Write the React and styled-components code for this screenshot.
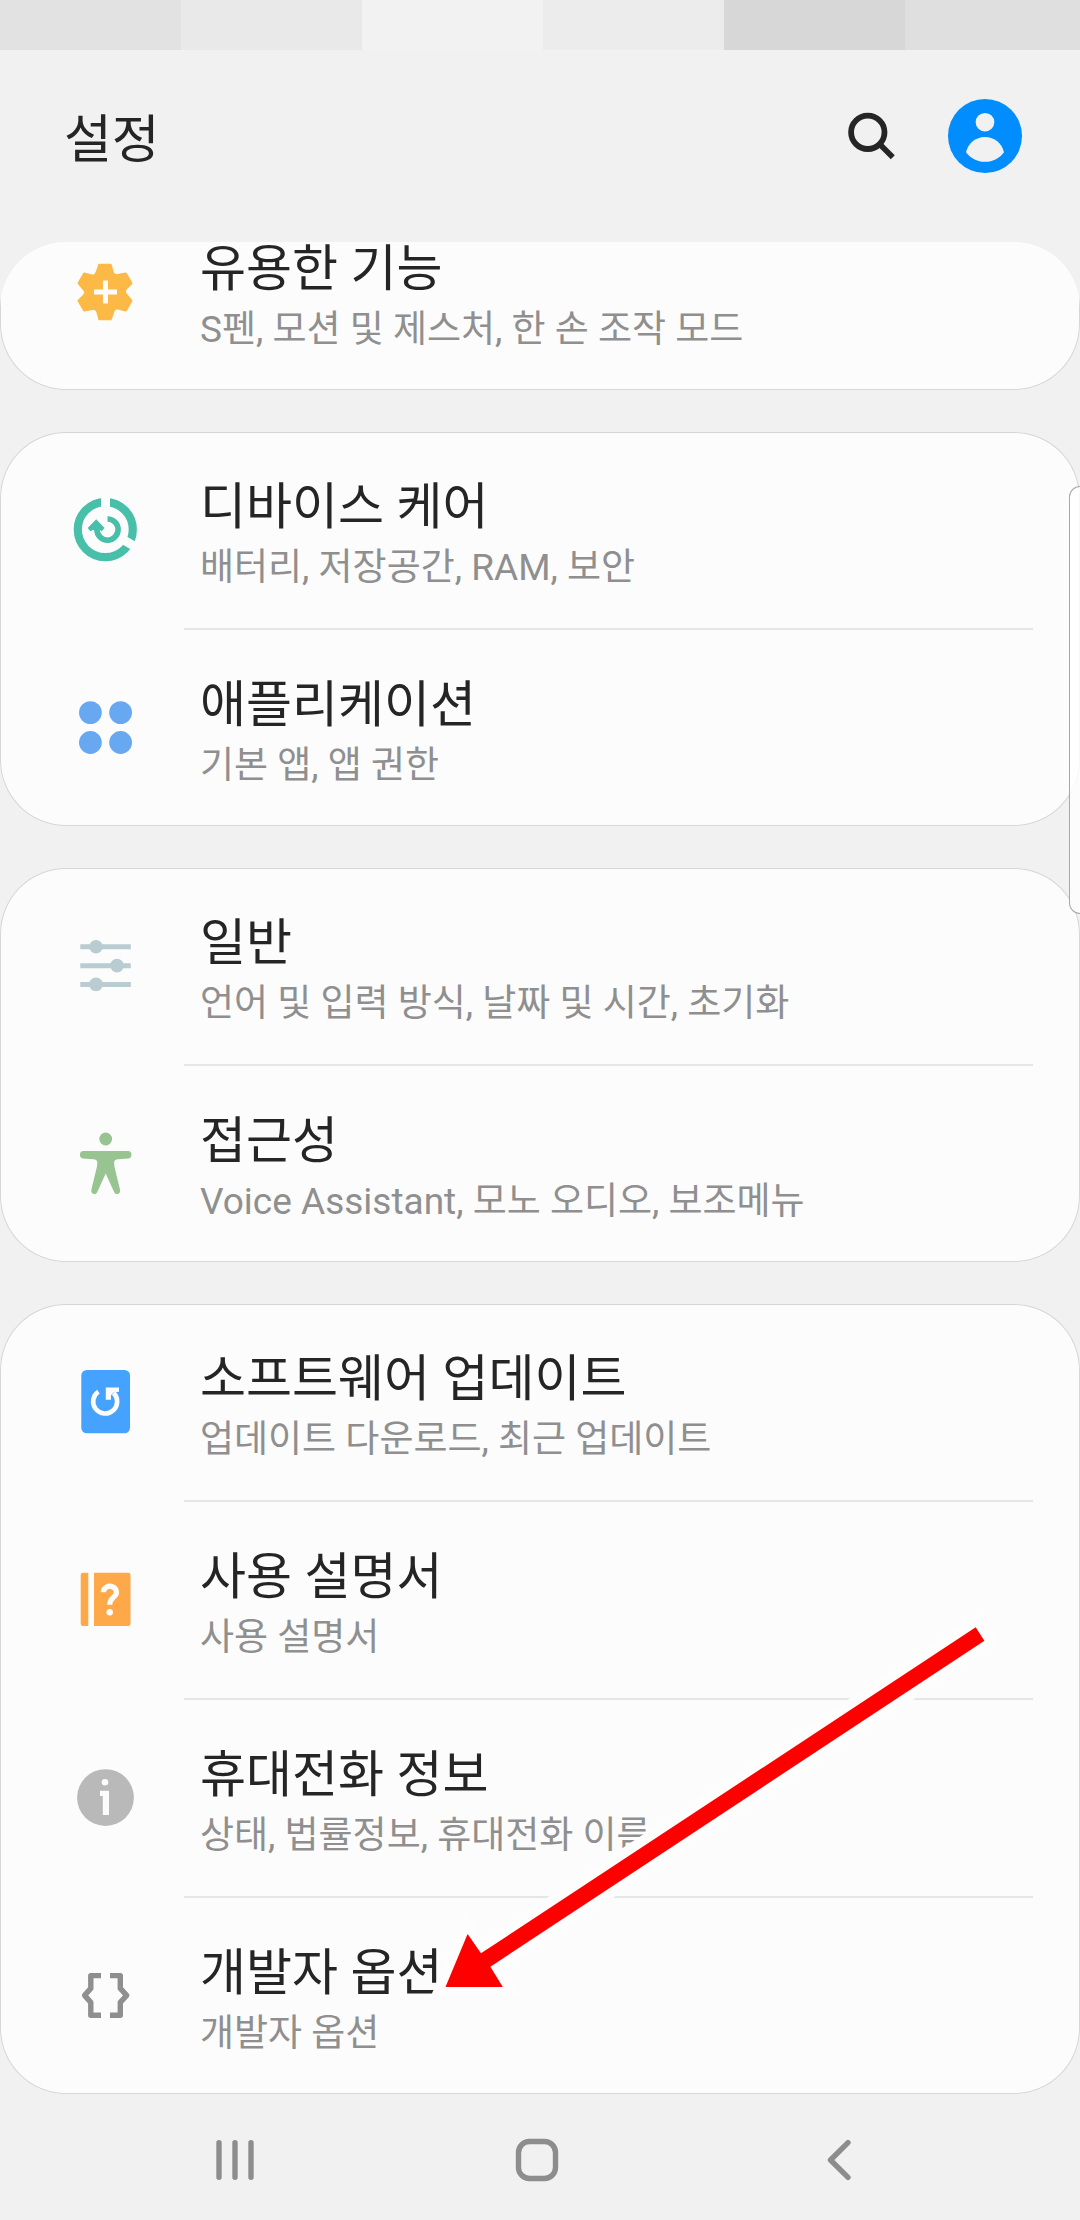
import React from "react";
import styled, { createGlobalStyle } from "styled-components";

// Icons
const gearPoint = (x, y, angle) => {
  const a = (angle * Math.PI) / 180;
  const px = 35 + x * Math.cos(a) - y * Math.sin(a);
  const py = 35 + x * Math.sin(a) + y * Math.cos(a);
  return `${px.toFixed(2)} ${py.toFixed(2)}`;
};

// One tooth for every 60 degrees, joined by a soft valley
const gearPath =
  [0, 60, 120, 180, 240, 300]
    .map((angle, i) => {
      const p = (x, y) => gearPoint(x, y, angle);
      return `${i === 0 ? "M" : "L"}${p(-5.5, -27)} L${p(5.5, -27)} L${p(7.2, -20.5)} Q${p(8.4, -15.6)} ${p(13.8, -17)}`;
    })
    .join(" ") + "Z";

const GearIcon = () => (
  <Icon viewBox="0 0 70 70">
    <path d={gearPath} fill="#fdb945" stroke="#fdb945" strokeWidth="2.6" strokeLinejoin="round" />
    <path d="M35.5 23.5v23M24 35h23" stroke="#fcfcfc" strokeWidth="5" />
  </Icon>
);

const CareIcon = () => (
  <Icon viewBox="0 0 70 70">
    <circle cx="35.3" cy="34.6" r="27.5" fill="none" stroke="#48bfa9" strokeWidth="8.2" />
    <path d="M35.5 0v14M54 45.2l14 8.2" stroke="#fcfcfc" strokeWidth="9" />
    <path d="M37.5 24a10.6 10.6 0 1 1-10.6 10.6v-2" fill="none" stroke="#48bfa9" strokeWidth="5.6" />
    <path d="M26.2 24.3l8.4 8.6-2.9 3.4-2-1.3h-7l-2.4 1.3-2.6-3.4z" fill="#48bfa9" />
  </Icon>
);

const AppsIcon = () => (
  <Icon viewBox="0 0 70 70" fill="#68a8f0">
    <circle cx="20.4" cy="19.6" r="11.4" />
    <circle cx="50.6" cy="19.6" r="11.4" />
    <circle cx="20.4" cy="49.5" r="11.4" />
    <circle cx="50.6" cy="49.5" r="11.4" />
  </Icon>
);

const SlidersIcon = () => (
  <Icon viewBox="0 0 70 70" fill="#b9ccd1">
    <path d="M10.3 13.3h50.5v5H10.3zM10.3 32.2h50.5v5H10.3zM10.3 51h50.5v5H10.3z" />
    <circle cx="26" cy="15.8" r="6.8" />
    <circle cx="47" cy="34.6" r="6.8" />
    <circle cx="26" cy="53.4" r="6.8" />
  </Icon>
);

const PersonIcon = () => (
  <Icon viewBox="0 0 70 70" fill="#97c491">
    <circle cx="35.7" cy="10" r="6.4" />
    <path d="M13.3 22h44.8c2 0 3.4 1.5 3.4 3.7s-1.3 3.6-3.4 3.8l-10 .8c-2.7.3-4 1.1-4 3.2l.3 4 5.6 23c.6 2.6-.8 4.6-2.9 4.6-1.5 0-2.5-.8-3.1-2.4L35.7 44.4l-8.3 18.3c-.6 1.6-1.6 2.4-3.1 2.4-2.1 0-3.5-2-2.9-4.6l5.6-23 .3-4c0-2.1-1.3-2.9-4-3.2l-10-.8c-2.1-.2-3.4-1.6-3.4-3.8s1.4-3.7 3.4-3.7z" />
  </Icon>
);

const UpdateIcon = () => (
  <Icon viewBox="0 0 70 70">
    <rect x="11.3" y="3" width="48.7" height="63.3" rx="5.5" fill="#46a2ff" />
    <path d="M28.4 24.6A12 12 0 1 0 43.6 26" fill="none" stroke="#fcfcfc" strokeWidth="4.6" />
    <path d="M35.8 20.4H49v4.4l-5.4.8-2.6 2.6v4.6h-5.2z" fill="#fcfcfc" />
  </Icon>
);

const ManualIcon = () => (
  <Icon viewBox="0 0 70 70">
    <path d="M13 7.7h5.3v53.4H13a2.3 2.3 0 0 1-2.3-2.3V10A2.3 2.3 0 0 1 13 7.7zM24 7.7h34.2a2.3 2.3 0 0 1 2.3 2.3v48.8a2.3 2.3 0 0 1-2.3 2.3H24z" fill="#ffa849" />
    <path d="M33.4 27.2a6.5 5.9 0 1 1 11 4.2c-2.6 2.5-4.7 3.6-4.7 8.4" fill="none" stroke="#fcfcfc" strokeWidth="5.2" />
    <circle cx="39.7" cy="47.2" r="3.2" fill="#fcfcfc" />
  </Icon>
);

const InfoIcon = () => (
  <Icon viewBox="0 0 70 70">
    <circle cx="35.5" cy="34.6" r="28.4" fill="#b9b9b9" />
    <circle cx="35" cy="19.3" r="3.3" fill="#fcfcfc" />
    <path d="M30 27.7h9v24.2h-6.2V33H30z" fill="#fcfcfc" />
  </Icon>
);

const BracesIcon = () => (
  <Icon viewBox="0 0 70 70" fill="none" stroke="#8f8f8f" strokeWidth="5.4" strokeLinejoin="round">
    <path d="M31 14.6H20.8v12.8l-6.2 7 6.2 7v12.8H31" />
    <path d="M40 14.6h10.3v12.8l6.4 7-6.4 7v12.8H40" />
  </Icon>
);

const groups = [
  [{ title: "유용한 기능", summary: "S펜, 모션 및 제스처, 한 손 조작 모드", icon: GearIcon }],
  [
    { title: "디바이스 케어", summary: "배터리, 저장공간, RAM, 보안", icon: CareIcon },
    { title: "애플리케이션", summary: "기본 앱, 앱 권한", icon: AppsIcon },
  ],
  [
    { title: "일반", summary: "언어 및 입력 방식, 날짜 및 시간, 초기화", icon: SlidersIcon },
    { title: "접근성", summary: "Voice Assistant, 모노 오디오, 보조메뉴", icon: PersonIcon },
  ],
  [
    { title: "소프트웨어 업데이트", summary: "업데이트 다운로드, 최근 업데이트", icon: UpdateIcon },
    { title: "사용 설명서", summary: "사용 설명서", icon: ManualIcon },
    { title: "휴대전화 정보", summary: "상태, 법률정보, 휴대전화 이름", icon: InfoIcon },
    { title: "개발자 옵션", summary: "개발자 옵션", icon: BracesIcon, marked: true },
  ],
];

const statusShades = ["#e2e2e2", "#e9e9e9", "#f2f2f2", "#ececec", "#d7d7d7", "#dfdfdf"];

const SettingsRow = ({ item }) => {
  const ItemIcon = item.icon;
  return (
    <Row>
      <RowLink href="#">
        <ItemIcon />
        <RowText>
          <RowTitle>{item.title}</RowTitle>
          <RowSummary>{item.summary}</RowSummary>
        </RowText>
      </RowLink>
      {item.marked && (
        <Pointer viewBox="0 0 570 390" aria-hidden="true">
          <path
            d="M545.7 17.3L554.4 30.7 60.4 356.7 72.8 377H15.5L37.6 324 51 343.3z"
            fill="#ff0000"
            stroke="#fdfdfd"
            strokeWidth="20"
            paintOrder="stroke"
          />
        </Pointer>
      )}
    </Row>
  );
};

const App = () => (
  <Screen>
    <GlobalStyle />
    <StatusBar>
      {statusShades.map((shade) => (
        <StatusBlock key={shade} $shade={shade} />
      ))}
    </StatusBar>

    <Header>
      <HeaderTitle>설정</HeaderTitle>
      <HeaderButton type="button" aria-label="검색">
        <svg width="48" height="48" viewBox="0 0 48 48" fill="none" stroke="#252525">
          <circle cx="19.8" cy="20.3" r="16.7" strokeWidth="5.8" />
          <path d="M31 31.5L44.8 45.3" strokeWidth="5.6" />
        </svg>
      </HeaderButton>
      <HeaderButton type="button" aria-label="계정">
        <svg width="74" height="74" viewBox="0 0 74 74">
          <circle cx="37" cy="37" r="37" fill="#028dff" />
          <circle cx="37" cy="23.2" r="9.3" fill="#f1f1f1" />
          <path d="M37 38c9.600 0 16.800 6.400 19 15.200-4.200 5.800-11 9.600-19 9.600s-14.800-3.800-19-9.600C20.200 44.400 27.400 38 37 38z" fill="#f1f1f1" />
        </svg>
      </HeaderButton>
    </Header>

    <SettingsList>
      {groups.map((items, i) => (
        <Group key={items[0].title} $scrolled={i === 0}>
          {items.map((item) => (
            <SettingsRow key={item.title} item={item} />
          ))}
        </Group>
      ))}
    </SettingsList>

    <NavBar>
      <NavButton type="button" aria-label="최근 실행 앱">
        <svg width="48" height="48" viewBox="0 0 48 48">
          <path d="M8 6.700v34.600M24 6.700v34.600M40 6.700v34.600" />
        </svg>
      </NavButton>
      <NavButton type="button" aria-label="홈">
        <svg width="48" height="48" viewBox="0 0 48 48">
          <rect x="5.500" y="5.500" width="37" height="37" rx="11" />
        </svg>
      </NavButton>
      <NavButton type="button" aria-label="뒤로">
        <svg width="48" height="48" viewBox="0 0 48 48">
          <path d="M33 6.700L15.500 24 33 41.300" />
        </svg>
      </NavButton>
    </NavBar>

    <EdgeHandle />
  </Screen>
);

export default App;

const GlobalStyle = createGlobalStyle`
  * {
    box-sizing: border-box;
  }

  body {
    margin: 0;
    background: #f1f1f1;
    font-family: Roboto, "Noto Sans CJK KR", sans-serif;
  }
`;

const Screen = styled.div`
  position: relative;
  display: flex;
  flex-direction: column;
  min-height: 100vh;
  overflow: hidden;
  background: #f1f1f1;
`;

const StatusBar = styled.div`
  display: flex;
  height: 50px;
`;

const StatusBlock = styled.div`
  flex: 181 1 0;
  background: ${({ $shade }) => $shade};

  &:last-child {
    flex-grow: 175;
  }
`;

const Header = styled.header`
  display: flex;
  align-items: center;
  gap: 52px;
  height: 192px;
  padding: 0 58px 20px 64px;
`;

const HeaderTitle = styled.h1`
  flex: 1;
  margin: 0;
  padding-top: 10px;
  color: #252525;
  font-size: 52px;
  font-weight: 400;
  line-height: 76px;
`;

const HeaderButton = styled.button`
  display: flex;
  padding: 0;
  border: none;
  background: none;
  cursor: pointer;
`;

const SettingsList = styled.main`
  display: flex;
  flex-direction: column;
  gap: 42px;
  overflow: hidden;
  border-radius: 66px 66px 0 0;
`;

// The first group is partly scrolled under the header
const Group = styled.ul`
  margin: ${({ $scrolled }) => ($scrolled ? "-48px 0 0" : "0")};
  padding: 0;
  list-style: none;
  border-radius: ${({ $scrolled }) => ($scrolled ? "0 0 66px 66px" : "66px")};
  background: #fcfcfc;
  box-shadow: inset 0 0 0 1px #d6d6d6;
`;

const Row = styled.li`
  position: relative;

  & + &::before {
    content: "";
    display: block;
    height: 2px;
    margin: 0 47px 0 184px;
    background: #e6e6e6;
  }
`;

const RowLink = styled.a`
  display: flex;
  align-items: center;
  gap: 60px;
  height: 196px;
  padding: 0 47px 0 70px;
  text-decoration: none;
`;

const Icon = styled.svg`
  flex: none;
  width: 70px;
  height: 70px;
`;

const RowText = styled.div`
  display: flex;
  flex-direction: column;
  padding-top: 8px;
`;

const RowTitle = styled.span`
  color: #252525;
  font-size: 50px;
  line-height: 68px;
`;

const RowSummary = styled.span`
  color: #8f8f8f;
  font-size: 37px;
  line-height: 54px;
`;

const Pointer = styled.svg`
  position: absolute;
  left: 430px;
  bottom: 94px;
  width: 570px;
  height: 390px;
  overflow: visible;
  pointer-events: none;
`;

const NavBar = styled.nav`
  display: grid;
  grid-template-columns: repeat(3, 1fr);
  height: 126px;
  padding: 6px 90px 0 84px;
`;

const NavButton = styled.button`
  display: flex;
  align-items: center;
  justify-content: center;
  padding: 0;
  border: none;
  background: none;
  cursor: pointer;

  svg {
    fill: none;
    stroke: #8d8d8d;
    stroke-width: 5.4px;
    stroke-linecap: round;
    stroke-linejoin: round;
  }
`;

const EdgeHandle = styled.div`
  position: absolute;
  top: 486px;
  right: 0;
  width: 11px;
  height: 428px;
  border: 1px solid #a8a8a8;
  border-right: none;
  border-radius: 14px 0 0 14px;
  background: rgba(255, 255, 255, 0.8);
`;
